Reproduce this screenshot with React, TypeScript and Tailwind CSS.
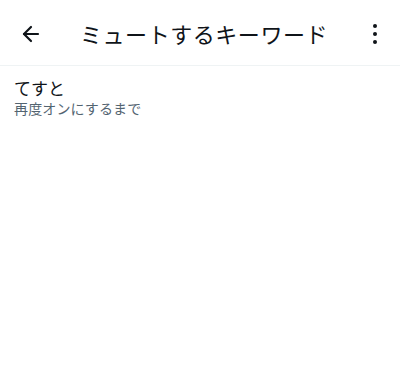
import { ArrowLeft } from "lucide-react";

const font = { fontFamily: '"Noto Sans CJK JP", "Noto Sans", sans-serif' };

export default function App() {
  return (
    <div className="min-h-screen w-full bg-white text-[#0f1419]" style={font}>
      <header className="flex h-[66px] items-center border-b border-[#eff3f4] pl-[15px] pr-[9px] pt-[2px]">
        <button className="flex h-8 w-8 items-center justify-center">
          <ArrowLeft className="h-6 w-6" strokeWidth={2.2} />
        </button>
        <h1 className="ml-[33px] flex-1 text-[22px] font-normal tracking-[0.025em]">ミュートするキーワード</h1>
        <button className="flex h-8 w-8 flex-col items-center justify-center gap-[4px]">
          <span className="h-[4px] w-[4px] rounded-full bg-[#0f1419]" />
          <span className="h-[4px] w-[4px] rounded-full bg-[#0f1419]" />
          <span className="h-[4px] w-[4px] rounded-full bg-[#0f1419]" />
        </button>
      </header>
      <div className="px-[14px] pt-[11px]">
        <p className="text-[17px] leading-[22px]">てすと</p>
        <p className="text-[14px] leading-[18px] tracking-[0.01em] text-[#536471]">再度オンにするまで</p>
      </div>
    </div>
  );
}
